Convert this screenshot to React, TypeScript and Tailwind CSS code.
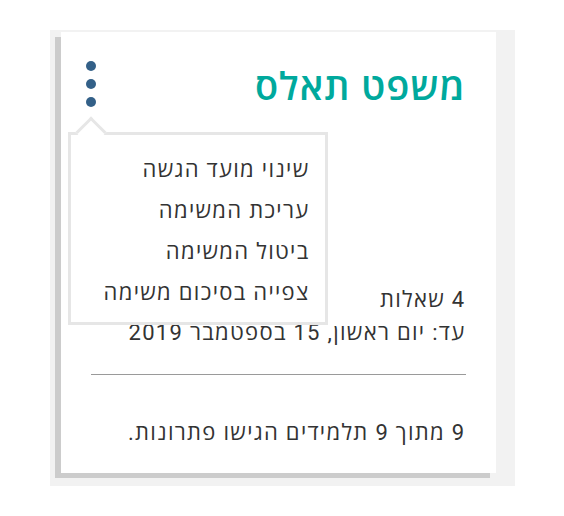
import React from 'react';

const menuItems = ['שינוי מועד הגשה', 'עריכת המשימה', 'ביטול המשימה', 'צפייה בסיכום משימה'];

function Dots() {
  return (
    <button className="flex flex-col items-center gap-[8px] w-[10px] -mt-[1px] -ml-[5px]">
      <span className="block w-[10px] h-[10px] rounded-full bg-[#336088]" />
      <span className="block w-[10px] h-[10px] rounded-full bg-[#336088]" />
      <span className="block w-[10px] h-[10px] rounded-full bg-[#336088]" />
    </button>
  );
}

function Menu() {
  return (
    <div className="absolute left-[7px] top-[100px] w-[260px] h-[193px] bg-white border-[3px] border-[#e6e6e6] z-10">
      {/* arrow */}
      <div className="absolute left-[9px] top-[-14px] w-[22px] h-[22px] rotate-45 bg-white border-l-[3px] border-t-[3px] border-[#e6e6e6]" />
      <ul dir="rtl" className="relative flex flex-col pt-[14px] pr-[15px] text-[22px] leading-[41px] tracking-[1.3px] text-[#333]">
        {menuItems.map((item) => (
          <li key={item} className="whitespace-nowrap">{item}</li>
        ))}
      </ul>
    </div>
  );
}

export default function App() {
  return (
    <div className="flex justify-center pt-[30px] font-[Roboto,'Open_Sans',sans-serif]">
      <div className="bg-[#f2f2f2] pt-[2px] pl-[11px] pr-[19px] pb-[13px]">
        <div className="relative w-[435px] bg-white shadow-[-6px_5px_0_0_#cccccc] px-[30px] pt-[30px] pb-[24px]">
          <div className="flex justify-between items-start">
            <Dots />
            <h1 dir="rtl" className="text-[38px] leading-[50px] tracking-[1px] text-[#00a99d] font-semibold">
              משפט תאלס
            </h1>
          </div>
          <Menu />
          <div dir="rtl" className="mt-[171px] text-[22px] leading-[33px] tracking-[1.3px] text-[#333]">
            <p>4 שאלות</p>
            <p>עד: יום ראשון, 15 בספטמבר 2019</p>
          </div>
          <hr className="mt-[25px] border-0 border-t border-[#9a9a9a]" />
          <p dir="rtl" className="mt-[41px] text-[22px] leading-[33px] tracking-[1.3px] text-[#333]">
            9 מתוך 9 תלמידים הגישו פתרונות.
          </p>
        </div>
      </div>
    </div>
  );
}
